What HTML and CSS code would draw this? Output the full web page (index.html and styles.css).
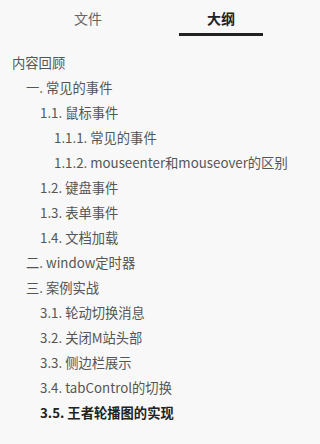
FILE: index.html
```html
<!DOCTYPE html>
<html lang="zh-CN">
<head>
<meta charset="utf-8">
<title>大纲</title>
<link rel="stylesheet" href="styles.css">
</head>
<body>
<div class="panel">
  <div class="tabs">
    <div class="tab">文件</div>
    <div class="tab active">大纲</div>
  </div>
  <ul class="outline">
    <li class="l0">内容回顾</li>
    <li class="l1">一. 常见的事件</li>
    <li class="l2">1.1. 鼠标事件</li>
    <li class="l3">1.1.1. 常见的事件</li>
    <li class="l3">1.1.2. mouseenter和mouseover的区别</li>
    <li class="l2">1.2. 键盘事件</li>
    <li class="l2">1.3. 表单事件</li>
    <li class="l2">1.4. 文档加载</li>
    <li class="l1">二. window定时器</li>
    <li class="l1">三. 案例实战</li>
    <li class="l2">3.1. 轮动切换消息</li>
    <li class="l2">3.2. 关闭M站头部</li>
    <li class="l2">3.3. 侧边栏展示</li>
    <li class="l2">3.4. tabControl的切换</li>
    <li class="l2 current">3.5. 王者轮播图的实现</li>
  </ul>
</div>
</body>
</html>
```
FILE: styles.css
```css
html, body {
  margin: 0;
  padding: 0;
  background: #f8f8f8;
}
body {
  width: 316px;
  height: 444px;
  overflow: hidden;
  font-family: "Noto Sans CJK SC", "Noto Sans", sans-serif;
  font-size: 13.3px;
  color: #555;
}
.tabs {
  display: flex;
  gap: 49px;
  padding-left: 46px;
}
.tab {
  width: 84px;
  text-align: center;
  line-height: 20px;
  padding-top: 8px;
  padding-bottom: 5px;
  border-bottom: 3px solid transparent;
  color: #666;
  font-size: 14px;
}
.tab.active {
  color: #222;
  font-weight: bold;
  border-bottom-color: #222;
}
.outline {
  list-style: none;
  margin: 0;
  padding: 14px 0 0 0;
}
.outline li {
  line-height: 25px;
  height: 25px;
  white-space: nowrap;
}
.l0 { padding-left: 12px; }
.l1 { padding-left: 26px; }
.l2 { padding-left: 40px; }
.l3 { padding-left: 54px; }
.outline li.current {
  color: #222;
  font-weight: bold;
}
```
